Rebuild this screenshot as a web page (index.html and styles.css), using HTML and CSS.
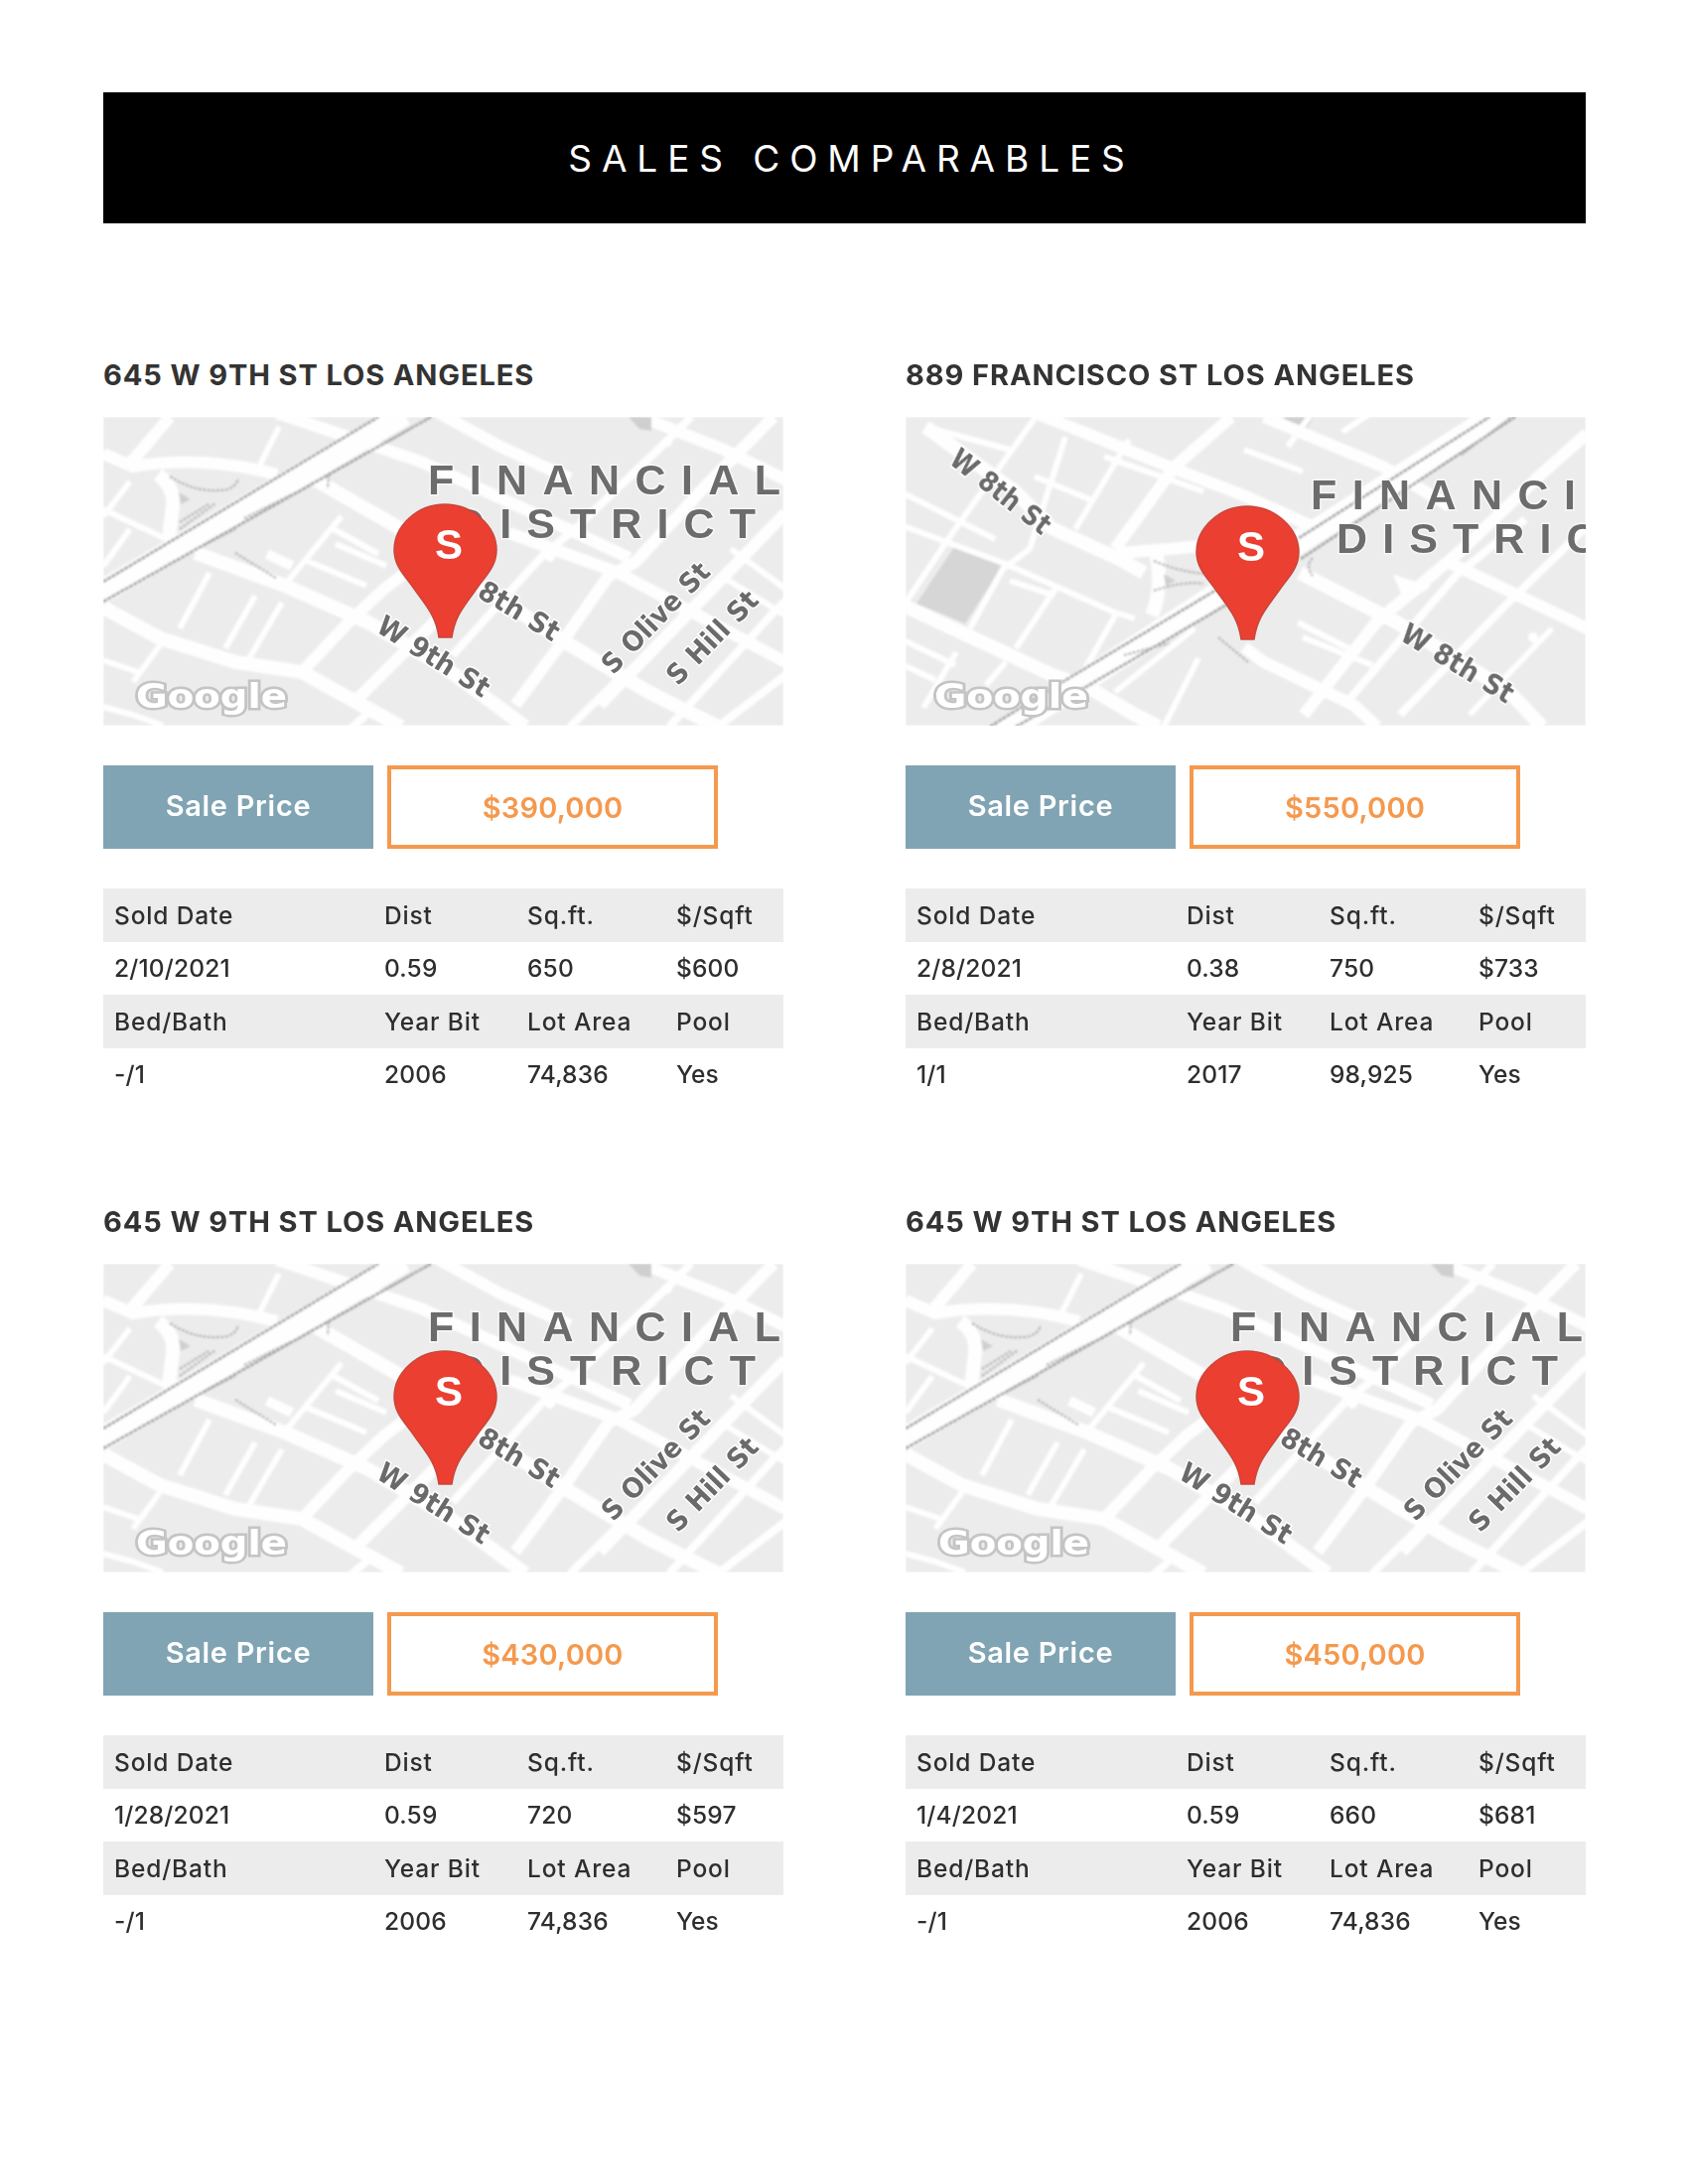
FILE: index.html
```html
<!DOCTYPE html>
<html lang="en">
<head>
<meta charset="utf-8">
<title>Sales Comparables</title>
<link rel="stylesheet" href="styles.css">
</head>
<body>
<svg class="defs" width="0" height="0" aria-hidden="true">
  <defs>
    <filter id="soft" x="-2%" y="-2%" width="104%" height="104%"><feGaussianBlur stdDeviation="0.8"/></filter>
    <filter id="softer" x="-5%" y="-20%" width="110%" height="140%"><feGaussianBlur stdDeviation="0.7"/></filter>
    <symbol id="base-a" viewBox="0 0 685 311">
      <g filter="url(#soft)">
        <rect class="block" width="685" height="311"/>
        <path class="rd w14" d="M0 192L57 223L133 247L200 257L247 283L300 312"/>
        <path class="rd w14" d="M93 137L183 170L267 207L345 253L425 312"/>
        <path class="rd w14" d="M213 63L300 113L375 167L459 223L549 277L619 312"/>
        <path class="rd w12" d="M409 117L519 157L575 187L687 247"/>
        <path class="rd w12" d="M175 -4L320 45L440 100L530 142"/>
        <path class="rd w12" d="M338 -4L400 30L470 62"/>
        <path class="rd w12" d="M542 0L625 33L687 63"/>
        <path class="rd w6" d="M0 93L57 120L100 137"/>
        <path class="rd w6" d="M0 245L38 258"/>
        <path class="rd w6" d="M234 128L285 150"/>
        <path class="rd w6" d="M205 145L265 170"/>
        <path class="rd w6" d="M230 112L277 138"/>
        <path class="rd w6" d="M622 160L687 200"/>
        <path class="rd w6" d="M632 133L687 173"/>
        <path class="rd w12" d="M0 37L30 50Q100 38 175 58"/>
        <path class="rd w14" d="M55 58Q72 70 70 90L66 122"/>
        <path class="rd w12" d="M27 47L67 0"/>
        <path class="rd w6" d="M157 50L177 10"/>
        <path class="rd w6" d="M77 213L107 157"/>
        <path class="rd w6" d="M123 233L153 180"/>
        <path class="rd w6" d="M147 243L180 187"/>
        <path class="rd w6" d="M30 267L57 230"/>
        <path class="rd w6" d="M0 100L27 65"/>
        <path class="rd w6" d="M0 150L27 113"/>
        <path class="rd w6" d="M182 170L240 100"/>
        <path class="rd w12" d="M200 257L247 207L283 173L310 153"/>
        <path class="rd w12" d="M257 283L333 207L352 190"/>
        <path class="rd w8" d="M352 240L442 140L475 113L569 23L592 0"/>
        <path class="rd w12" d="M415 290L462 227L509 160L535 147L609 67L675 0"/>
        <path class="rd w12" d="M500 290L619 167L687 97"/>
        <path class="rd w8" d="M570 312L675 197L687 185"/>
        <path class="rd w8" d="M470 312L520 263"/>
        <path class="rd w8" d="M619 312L687 260"/>
        <path class="rd w8" d="M265 300L230 330"/>
        <path class="rd w6" d="M0 292L30 300L60 311"/>
        <path class="rd w24" d="M-6 179L303 -3"/>
        <path class="fw" d="M0 166L277 0"/>
        <path class="fw" d="M0 186L330 0"/>
        <path class="fw2" d="M283 27L330 0"/>
        <path class="fw2" d="M142 102L190 78"/>
        <path class="fw2" d="M77 113L113 87"/>
        <path class="fw2" d="M77 106L106 88"/>
        <path class="fw2" d="M103 128L133 113"/>
        <path class="fw2" d="M67 60Q95 78 125 73Q134 70 136 62"/>
        <path class="fw2" d="M133 137L175 163"/>
        <path class="fw2" d="M227 58L226 72"/>
        <path class="tint" d="M76 76L88 83L78 88Z"/>
        <path class="tint" d="M529 0L552 0L552 14L540 12Z"/>
        <path class="rd w10" d="M165 138L190 150"/>
        <circle class="spot" cx="450" cy="141" r="5"/>
        <circle class="spot" cx="568" cy="25" r="5"/>
      </g>
    </symbol>
    <symbol id="base-b" viewBox="0 0 685 311">
      <g filter="url(#soft)">
        <rect class="block" width="685" height="311"/>
        <path class="hall" d="M51 128L98 150L60 208L11 188Z"/>
        <path class="tint" d="M381 0L411 0L404 11L384 6Z"/>
        <path class="rd w14" d="M20 10L110 75L147 112L215 143L240 157"/>
        <path class="rd w12" d="M216 137L300 130L345 128"/>
        <path class="rd w14" d="M397 157L495 207L608 277L641 312"/>
        <path class="rd w14" d="M-2 190L148 260L185 273L231 300L255 312"/>
        <path class="rd w6" d="M-2 110L98 147L211 197L231 203"/>
        <path class="rd w12" d="M341 232L361 247L451 290L475 312"/>
        <path class="rd w12" d="M131 -4L265 50L343 80L420 115"/>
        <path class="rd w12" d="M361 0L481 50L548 90"/>
        <path class="rd w12" d="M548 147L674 207L690 215"/>
        <path class="rd w6" d="M20 10L105 33"/>
        <path class="rd w6" d="M-2 77L90 123"/>
        <path class="rd w6" d="M130 60L190 85"/>
        <path class="rd w6" d="M105 165L150 180"/>
        <path class="rd w6" d="M-2 225L50 250"/>
        <path class="rd w6" d="M-2 250L30 265"/>
        <path class="rd w6" d="M200 40L300 75"/>
        <path class="rd w6" d="M341 33L400 55"/>
        <path class="rd w6" d="M0 187L45 120L131 0"/>
        <path class="rd w6" d="M65 213L98 153L125 133L161 20"/>
        <path class="rd w6" d="M111 233L151 173"/>
        <path class="rd w6" d="M171 113L225 23"/>
        <path class="rd w12" d="M211 133L271 50L328 0"/>
        <path class="rd w6" d="M181 253L211 200"/>
        <path class="rd w6" d="M18 293L51 237"/>
        <path class="rd w6" d="M81 270L101 247"/>
        <path class="rd w6" d="M211 277L291 213"/>
        <path class="rd w6" d="M260 312L295 243"/>
        <path class="rd w12" d="M401 300L474 207L561 133L641 57L686 17"/>
        <path class="rd w8" d="M448 283L554 160L624 103"/>
        <path class="rd w8" d="M498 300L601 193L686 110"/>
        <path class="rd w6" d="M568 300L651 213"/>
        <path class="rd w6" d="M440 15L470 -5"/>
        <path class="rd w6" d="M385 30L410 -5"/>
        <path class="rd w6" d="M400 222L470 250"/>
        <path class="rd w6" d="M395 207L450 235"/>
        <path class="rd w14" d="M252 135Q260 170 248 200"/>
        <path class="rd w24" d="M98 318L601 -6"/>
        <path class="fw" d="M85 312L158 267L315 173"/>
        <path class="fw" d="M111 312L185 270L325 188"/>
        <path class="fw" d="M396 122L588 0"/>
        <path class="fw" d="M398 143L614 0"/>
        <path class="fw2" d="M220 240L265 228"/>
        <path class="fw2" d="M250 175Q280 165 300 168"/>
        <path class="fw2" d="M250 145Q285 160 320 158"/>
        <path class="fw2" d="M315 222L345 247"/>
        <path class="fw2" d="M410 142Q402 150 410 160"/>
        <path class="fw2" d="M560 38L610 0"/>
        <path class="tint" d="M260 158L272 165L262 170Z"/>
        <path class="rd w8" d="M498 165L520 172L505 182Z"/>
        <circle class="spot" cx="632" cy="222" r="5"/>
      </g>
    </symbol>
    <symbol id="pin" viewBox="0 0 105 136">
      <path class="pin-shape" d="M52 1C24 1 1 23 1 47C1 63 11 72 21 86C33 103 43 113 46 135L59 135C62 113 72 103 84 86C94 72 104 63 104 47C104 23 80 1 52 1Z"/>
    </symbol>
  </defs>
</svg>

<main class="page">
  <header class="banner"><h1 class="banner-title">SALES COMPARABLES</h1></header>

  <div class="cards">
    <!-- Card 1 -->
    <section class="card">
      <h2 class="card-title">645 W 9TH ST LOS ANGELES</h2>
      <svg class="map" viewBox="0 0 685 311" width="685" height="311" role="img" aria-label="Map of 645 W 9th St">
        <use href="#base-a" width="685" height="311"/>
        <g filter="url(#softer)">
          <text class="district" x="327" y="78" textLength="355">FINANCIAL</text>
          <text class="district" x="353" y="122" textLength="304">DISTRICT</text>
          <text class="street" transform="translate(333 241) rotate(32)" y="10" textLength="128" lengthAdjust="spacingAndGlyphs">W 9th St</text>
          <text class="street" transform="translate(419 195) rotate(31)" y="10" textLength="90" lengthAdjust="spacingAndGlyphs">8th St</text>
          <text class="street" transform="translate(556 202) rotate(-46)" y="10" textLength="143" lengthAdjust="spacingAndGlyphs">S Olive St</text>
          <text class="street" transform="translate(613 222) rotate(-46)" y="10" textLength="119" lengthAdjust="spacingAndGlyphs">S Hill St</text>
          <text class="google" x="33" y="293" textLength="152" lengthAdjust="spacingAndGlyphs">Google</text>
        </g>
        <use href="#pin" x="292" y="87" width="105" height="136"/>
        <text class="pin-letter" x="348" y="143">S</text>
      </svg>
      <div class="price-row">
        <div class="price-label">Sale Price</div>
        <div class="price-value">$390,000</div>
      </div>
      <div class="facts">
        <div class="facts-row shaded"><span>Sold Date</span><span>Dist</span><span>Sq.ft.</span><span>$/Sqft</span></div>
        <div class="facts-row"><span>2/10/2021</span><span>0.59</span><span>650</span><span>$600</span></div>
        <div class="facts-row shaded"><span>Bed/Bath</span><span>Year Bit</span><span>Lot Area</span><span>Pool</span></div>
        <div class="facts-row"><span>-/1</span><span>2006</span><span>74,836</span><span>Yes</span></div>
      </div>
    </section>

    <!-- Card 2 -->
    <section class="card">
      <h2 class="card-title">889 FRANCISCO ST LOS ANGELES</h2>
      <svg class="map" viewBox="0 0 685 311" width="685" height="311" role="img" aria-label="Map of 889 Francisco St">
        <use href="#base-b" width="685" height="311"/>
        <g filter="url(#softer)">
          <text class="district" x="408" y="93" textLength="355">FINANCIAL</text>
          <text class="district" x="434" y="137" textLength="304">DISTRICT</text>
          <text class="street" transform="translate(96 75) rotate(38)" y="10" textLength="120" lengthAdjust="spacingAndGlyphs">W 8th St</text>
          <text class="street" transform="translate(556 248) rotate(31)" y="10" textLength="127" lengthAdjust="spacingAndGlyphs">W 8th St</text>
          <text class="google" x="29" y="293" textLength="155" lengthAdjust="spacingAndGlyphs">Google</text>
        </g>
        <use href="#pin" x="292" y="89" width="105" height="136"/>
        <text class="pin-letter" x="348" y="145">S</text>
      </svg>
      <div class="price-row">
        <div class="price-label">Sale Price</div>
        <div class="price-value">$550,000</div>
      </div>
      <div class="facts">
        <div class="facts-row shaded"><span>Sold Date</span><span>Dist</span><span>Sq.ft.</span><span>$/Sqft</span></div>
        <div class="facts-row"><span>2/8/2021</span><span>0.38</span><span>750</span><span>$733</span></div>
        <div class="facts-row shaded"><span>Bed/Bath</span><span>Year Bit</span><span>Lot Area</span><span>Pool</span></div>
        <div class="facts-row"><span>1/1</span><span>2017</span><span>98,925</span><span>Yes</span></div>
      </div>
    </section>

    <!-- Card 3 -->
    <section class="card">
      <h2 class="card-title">645 W 9TH ST LOS ANGELES</h2>
      <svg class="map" viewBox="0 0 685 311" width="685" height="311" role="img" aria-label="Map of 645 W 9th St">
        <use href="#base-a" width="685" height="311"/>
        <g filter="url(#softer)">
          <text class="district" x="327" y="78" textLength="355">FINANCIAL</text>
          <text class="district" x="353" y="122" textLength="304">DISTRICT</text>
          <text class="street" transform="translate(333 241) rotate(32)" y="10" textLength="128" lengthAdjust="spacingAndGlyphs">W 9th St</text>
          <text class="street" transform="translate(419 195) rotate(31)" y="10" textLength="90" lengthAdjust="spacingAndGlyphs">8th St</text>
          <text class="street" transform="translate(556 202) rotate(-46)" y="10" textLength="143" lengthAdjust="spacingAndGlyphs">S Olive St</text>
          <text class="street" transform="translate(613 222) rotate(-46)" y="10" textLength="119" lengthAdjust="spacingAndGlyphs">S Hill St</text>
          <text class="google" x="33" y="293" textLength="152" lengthAdjust="spacingAndGlyphs">Google</text>
        </g>
        <use href="#pin" x="292" y="87" width="105" height="136"/>
        <text class="pin-letter" x="348" y="143">S</text>
      </svg>
      <div class="price-row">
        <div class="price-label">Sale Price</div>
        <div class="price-value">$430,000</div>
      </div>
      <div class="facts">
        <div class="facts-row shaded"><span>Sold Date</span><span>Dist</span><span>Sq.ft.</span><span>$/Sqft</span></div>
        <div class="facts-row"><span>1/28/2021</span><span>0.59</span><span>720</span><span>$597</span></div>
        <div class="facts-row shaded"><span>Bed/Bath</span><span>Year Bit</span><span>Lot Area</span><span>Pool</span></div>
        <div class="facts-row"><span>-/1</span><span>2006</span><span>74,836</span><span>Yes</span></div>
      </div>
    </section>

    <!-- Card 4 -->
    <section class="card">
      <h2 class="card-title">645 W 9TH ST LOS ANGELES</h2>
      <svg class="map" viewBox="0 0 685 311" width="685" height="311" role="img" aria-label="Map of 645 W 9th St">
        <use href="#base-a" width="685" height="311"/>
        <g filter="url(#softer)">
          <text class="district" x="327" y="78" textLength="355">FINANCIAL</text>
          <text class="district" x="353" y="122" textLength="304">DISTRICT</text>
          <text class="street" transform="translate(333 241) rotate(32)" y="10" textLength="128" lengthAdjust="spacingAndGlyphs">W 9th St</text>
          <text class="street" transform="translate(419 195) rotate(31)" y="10" textLength="90" lengthAdjust="spacingAndGlyphs">8th St</text>
          <text class="street" transform="translate(556 202) rotate(-46)" y="10" textLength="143" lengthAdjust="spacingAndGlyphs">S Olive St</text>
          <text class="street" transform="translate(613 222) rotate(-46)" y="10" textLength="119" lengthAdjust="spacingAndGlyphs">S Hill St</text>
          <text class="google" x="33" y="293" textLength="152" lengthAdjust="spacingAndGlyphs">Google</text>
        </g>
        <use href="#pin" x="292" y="87" width="105" height="136"/>
        <text class="pin-letter" x="348" y="143">S</text>
      </svg>
      <div class="price-row">
        <div class="price-label">Sale Price</div>
        <div class="price-value">$450,000</div>
      </div>
      <div class="facts">
        <div class="facts-row shaded"><span>Sold Date</span><span>Dist</span><span>Sq.ft.</span><span>$/Sqft</span></div>
        <div class="facts-row"><span>1/4/2021</span><span>0.59</span><span>660</span><span>$681</span></div>
        <div class="facts-row shaded"><span>Bed/Bath</span><span>Year Bit</span><span>Lot Area</span><span>Pool</span></div>
        <div class="facts-row"><span>-/1</span><span>2006</span><span>74,836</span><span>Yes</span></div>
      </div>
    </section>
  </div>
</main>
</body>
</html>
```
FILE: styles.css
```css
* { box-sizing: border-box; }

html, body { margin: 0; background: #fff; }

body {
  font-family: Inter, "Noto Sans", "Liberation Sans", sans-serif;
  color: #303030;
}

.defs { display: block; height: 0; }

.page {
  width: 1700px;
  padding: 93px 103px 0 104px;
}

.banner {
  height: 132px;
  padding-left: 14px;
  background: #000;
  display: flex;
  align-items: center;
  justify-content: center;
}

.banner-title {
  margin: 0;
  color: #fff;
  font-size: 37px;
  font-weight: 400;
  letter-spacing: 9.9px;
  line-height: 1;
  white-space: nowrap;
}

.cards {
  margin-top: 135px;
  display: grid;
  grid-template-columns: 685px 685px;
  column-gap: 123px;
  row-gap: 104px;
}

.card { width: 685px; }

.card-title {
  margin: 0 0 26px;
  height: 34px;
  font-size: 29px;
  font-weight: 700;
  line-height: 36px;
  letter-spacing: 0.9px;
  color: #333;
  white-space: nowrap;
}

.map { display: block; }

.price-row {
  margin-top: 40px;
  height: 84px;
  display: flex;
  gap: 14px;
}

.price-label,
.price-value {
  display: flex;
  align-items: center;
  justify-content: center;
  font-size: 29px;
  font-weight: 500;
}

.price-label {
  width: 272px;
  padding-bottom: 3px;
  background: #80a4b3;
  color: #fff;
  font-weight: 600;
  letter-spacing: 0.7px;
}

.price-value {
  width: 333px;
  border: 4px solid #f4994e;
  color: #f4994e;
  font-weight: 600;
  letter-spacing: 0.2px;
}

.facts { margin-top: 40px; }

.facts-row {
  height: 53.5px;
  display: grid;
  grid-template-columns: 272px 144px 150px 1fr;
  align-items: center;
  font-size: 24.5px;
  font-weight: 500;
  letter-spacing: 0.15px;
  color: #2e2e2e;
}

.facts-row span { padding-left: 11px; }

.shaded {
  background: #ececec;
  letter-spacing: 0.85px;
}

/* Map drawing */
.block { fill: #ececec; }
.hall { fill: #d6d6d6; }
.tint { fill: #cfcfcf; }
.spot { fill: #fff; }

.rd { fill: none; stroke: #fefefe; }
.w6 { stroke-width: 6; }
.w8 { stroke-width: 8; }
.w10 { stroke-width: 10; }
.w12 { stroke-width: 12; }
.w14 { stroke-width: 14; }
.w24 { stroke-width: 24; }

.fw { fill: none; stroke: #9a9a9a; stroke-width: 2.6; stroke-dasharray: 4 1; }
.fw2 { fill: none; stroke: #b0b0b0; stroke-width: 2.2; stroke-dasharray: 3 1.5; }

.district {
  font-family: "Liberation Sans", sans-serif;
  font-size: 43px;
  font-weight: 700;
  fill: #6c6c6c;
  stroke: rgba(255, 255, 255, 0.6);
  stroke-width: 3px;
  paint-order: stroke;
}

.street {
  font-family: "DejaVu Sans", sans-serif;
  font-size: 28px;
  font-weight: 700;
  text-anchor: middle;
  fill: #6a6a6a;
  stroke: #fff;
  stroke-width: 3px;
  paint-order: stroke;
}

.google {
  font-family: "DejaVu Sans", sans-serif;
  font-size: 33px;
  font-weight: 700;
  fill: #fff;
  stroke: #c4c4c4;
  stroke-width: 5px;
  paint-order: stroke;
}

.pin-shape { fill: #ea3f31; stroke: #c9463a; stroke-width: 1.5; }

.pin-letter {
  font-family: "Liberation Sans", sans-serif;
  font-size: 42px;
  font-weight: 700;
  text-anchor: middle;
  fill: #fff;
}
```
